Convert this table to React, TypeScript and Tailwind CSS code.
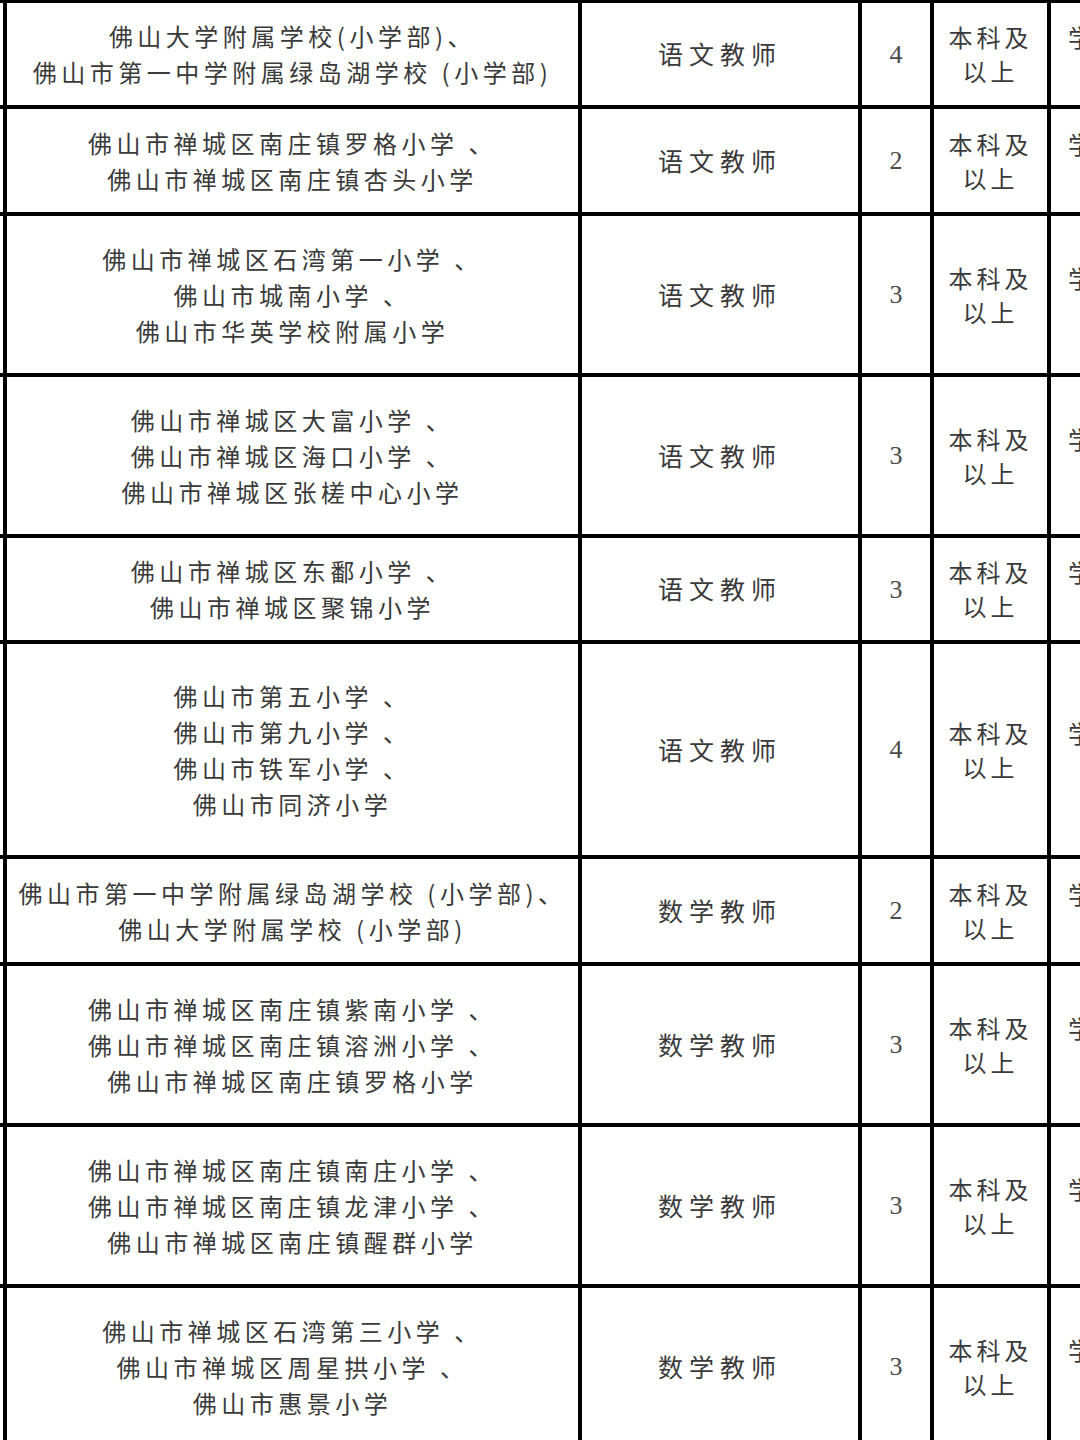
const cjk = { fontFamily: '"Noto Sans CJK SC", "Noto Sans", sans-serif' };
const serif = { fontFamily: '"Liberation Serif", "DejaVu Serif", serif' };

type Row = {
  schools: string[];
  subject: string;
  count: number;
  height: string;
};

const rows: Row[] = [
  {
    schools: ['佛山大学附属学校(小学部)、', '佛山市第一中学附属绿岛湖学校 (小学部)'],
    subject: '语文教师',
    count: 4,
    height: 'h-[106px]',
  },
  {
    schools: ['佛山市禅城区南庄镇罗格小学 、', '佛山市禅城区南庄镇杏头小学'],
    subject: '语文教师',
    count: 2,
    height: 'h-[107px]',
  },
  {
    schools: ['佛山市禅城区石湾第一小学 、', '佛山市城南小学 、', '佛山市华英学校附属小学'],
    subject: '语文教师',
    count: 3,
    height: 'h-[161px]',
  },
  {
    schools: ['佛山市禅城区大富小学 、', '佛山市禅城区海口小学 、', '佛山市禅城区张槎中心小学'],
    subject: '语文教师',
    count: 3,
    height: 'h-[161px]',
  },
  {
    schools: ['佛山市禅城区东鄱小学 、', '佛山市禅城区聚锦小学'],
    subject: '语文教师',
    count: 3,
    height: 'h-[106px]',
  },
  {
    schools: ['佛山市第五小学 、', '佛山市第九小学 、', '佛山市铁军小学 、', '佛山市同济小学'],
    subject: '语文教师',
    count: 4,
    height: 'h-[215px]',
  },
  {
    schools: ['佛山市第一中学附属绿岛湖学校 (小学部)、', '佛山大学附属学校 (小学部)'],
    subject: '数学教师',
    count: 2,
    height: 'h-[107px]',
  },
  {
    schools: ['佛山市禅城区南庄镇紫南小学 、', '佛山市禅城区南庄镇溶洲小学 、', '佛山市禅城区南庄镇罗格小学'],
    subject: '数学教师',
    count: 3,
    height: 'h-[161px]',
  },
  {
    schools: ['佛山市禅城区南庄镇南庄小学 、', '佛山市禅城区南庄镇龙津小学 、', '佛山市禅城区南庄镇醒群小学'],
    subject: '数学教师',
    count: 3,
    height: 'h-[161px]',
  },
  {
    schools: ['佛山市禅城区石湾第三小学 、', '佛山市禅城区周星拱小学 、', '佛山市惠景小学'],
    subject: '数学教师',
    count: 3,
    height: 'h-[161px]',
  },
];

const App = () => {
  return (
    <div className="w-[1080px] h-[1440px] overflow-hidden bg-white">
      {/* the table runs past the right edge, as in the screenshot */}
      <div className="w-[1201px] border-t-[3px] border-black">
        <table className="table-fixed border-separate border-spacing-0 w-[1201px] text-[#3a3a3a]">
          <tbody>
            {rows.map((row, i) => (
              <tr key={i} className={row.height}>
                <td className="w-[3px] p-0 border-b-4 border-black" />
                <td
                  className="w-[579px] p-0 border-x-4 border-b-4 border-black text-center align-middle"
                  style={cjk}
                >
                  {row.schools.map((s) => (
                    <div key={s} className="whitespace-pre text-[24px] leading-[36px] tracking-[4.5px]">
                      {s}
                    </div>
                  ))}
                </td>
                <td
                  className="w-[280px] p-0 border-r-4 border-b-4 border-black text-center align-middle text-[25px] tracking-[6px]"
                  style={cjk}
                >
                  {row.subject}
                </td>
                <td
                  className="w-[72px] p-0 border-r-4 border-b-4 border-black text-center align-middle text-[26px] text-[#4a4a4a]"
                  style={serif}
                >
                  {row.count}
                </td>
                <td
                  className="w-[117px] p-0 border-r-4 border-b-4 border-black text-center align-middle text-[24px] leading-[34px] tracking-[4px]"
                  style={cjk}
                >
                  <div>本科及</div>
                  <div>以上</div>
                </td>
                <td
                  className="w-[150px] p-0 border-r-4 border-b-4 border-black text-center align-middle text-[24px] leading-[34px] tracking-[4px]"
                  style={cjk}
                >
                  <div className="whitespace-nowrap">学士学位</div>
                  <div className="whitespace-nowrap">及以上</div>
                </td>
              </tr>
            ))}
          </tbody>
        </table>
      </div>
    </div>
  );
};

export default App;
